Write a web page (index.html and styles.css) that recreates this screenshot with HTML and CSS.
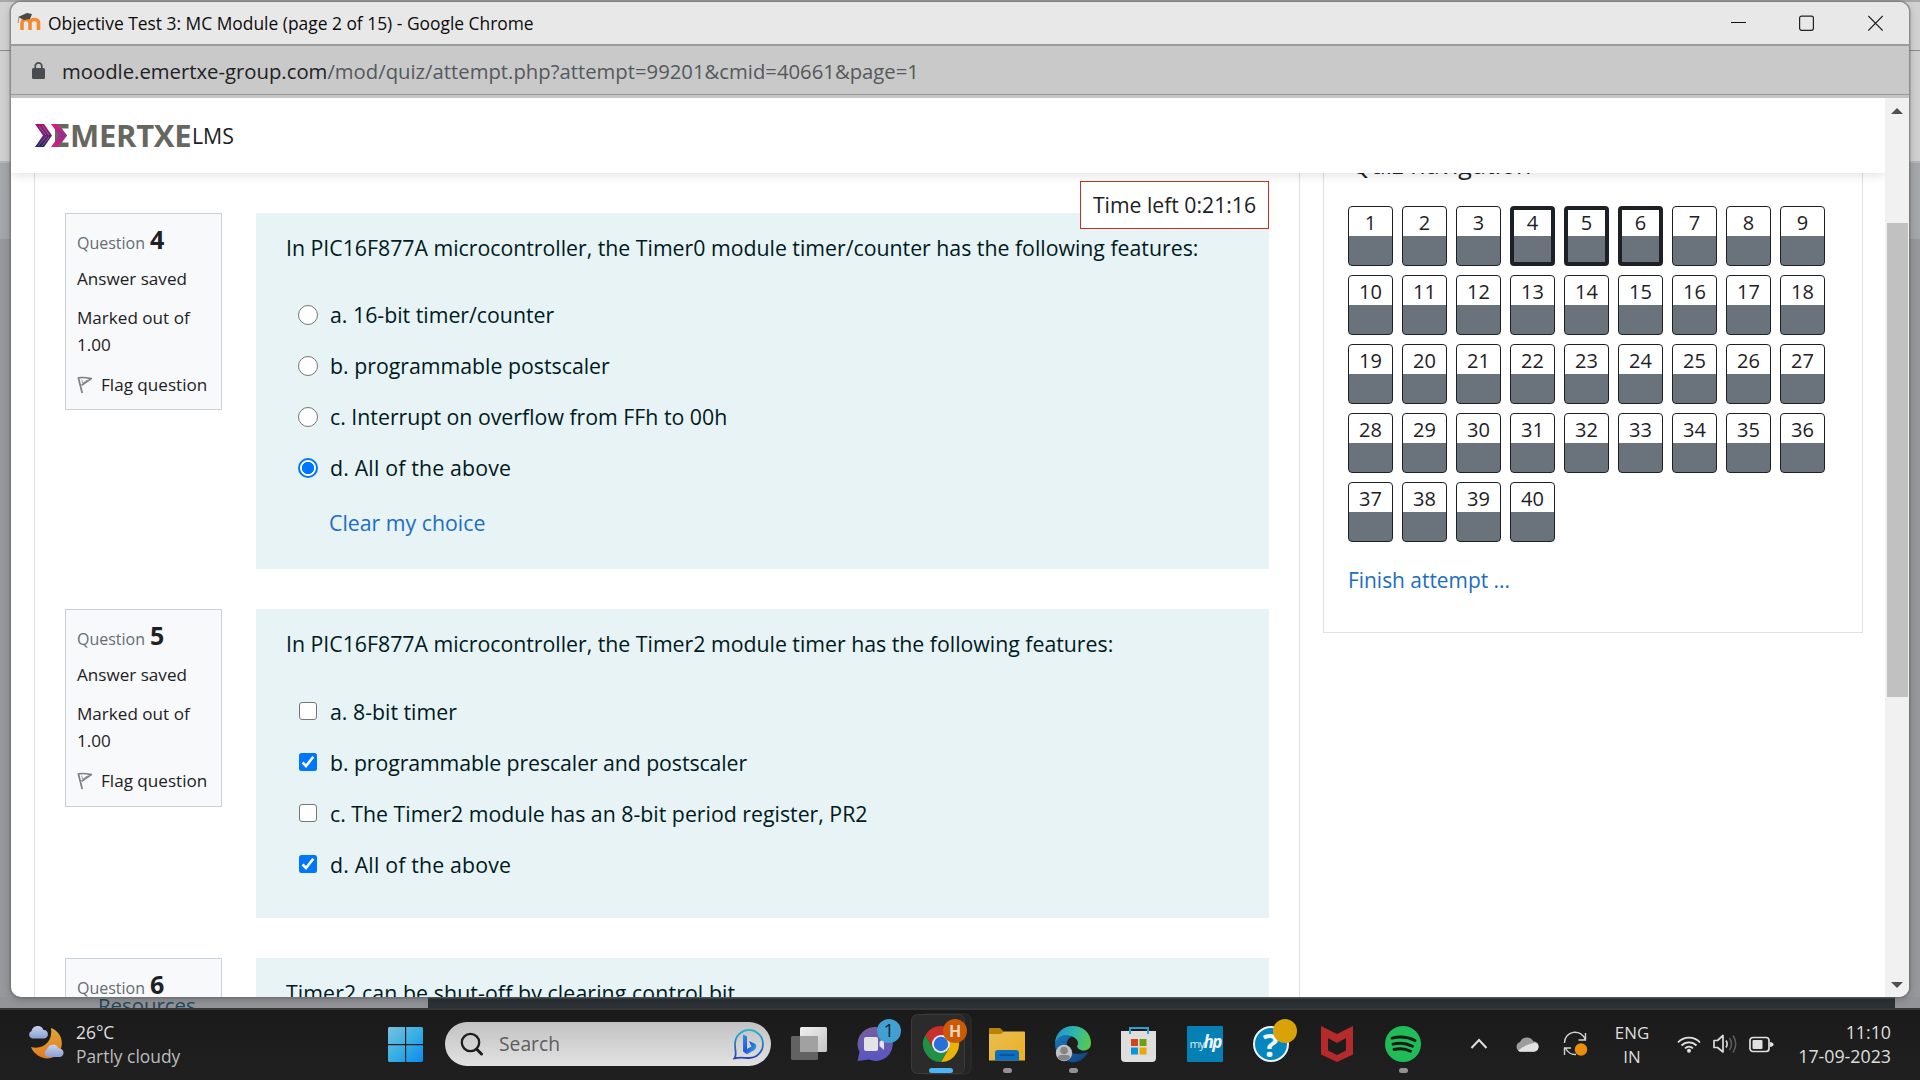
FILE: index.html
```html
<!DOCTYPE html>
<html lang="en">
<head>
<meta charset="utf-8">
<title>Objective Test 3: MC Module (page 2 of 15)</title>
<link rel="stylesheet" href="styles.css">
</head>
<body>
<svg class="defs" width="0" height="0" aria-hidden="true">
  <symbol id="flag" viewBox="0 0 16 18"><path d="M1.2 1.2 5.2 17M1.4 1.8 Q6 .9 14.3 2.6 L4.6 9.2" fill="none" stroke="#7d7f82" stroke-width="1.7" stroke-linejoin="round"/><path d="M4.6 3.6 L5.6 7.2 L10.4 3.9" fill="none" stroke="#9a9c9f" stroke-width="1"/></symbol>
</svg>

<div class="behind">
  <div class="behind-tabs"></div>
  <div class="behind-toolbar"></div>
  <div class="behind-header"></div>
  <div class="behind-body"></div>
  <div class="behind-footer"><span class="behind-link">Resources</span><span class="behind-dark"></span></div>
</div>

<div class="window">
  <header class="titlebar">
    <svg class="moodle" width="25" height="20" viewBox="0 0 25 20"><path d="M5 18V11.500Q5 7.500 9 7.500T13 11.500V18M13 11.500Q13 7.500 17.500 7.500T21.500 11.500V18" fill="none" stroke="#f58a2c" stroke-width="3.600"/><path d="M1 5 10 1 15 2 13 7 7 8 3 6Z" fill="#4a4a4a"/><path d="M2 5.500 1 11" stroke="#b58a68"/></svg>
    <span class="window-title">Objective Test 3: MC Module (page 2 of 15) - Google Chrome</span>
    <div class="controls">
      <svg width="15" height="20" viewBox="0 0 15 20"><path d="M0 9.500H15" stroke="#111"/></svg>
      <svg width="15" height="20" viewBox="0 0 15 20"><rect x=".6" y="3.100" width="13.800" height="14.200" rx="2" fill="none" stroke="#222" stroke-width="1.200"/></svg>
      <svg width="15" height="20" viewBox="0 0 15 20"><path d="M.3 3 14.700 17.500M14.700 3 .3 17.500" stroke="#222" stroke-width="1.300"/></svg>
    </div>
  </header>
  <div class="addressbar">
    <svg width="13" height="17" viewBox="0 0 13 17"><rect x="0" y="6" width="13" height="11" rx="1.500" fill="#494c50"/><path d="M3.200 7V4.200a3.300 3.300 0 0 1 6.600 0V7" fill="none" stroke="#494c50" stroke-width="1.700"/></svg>
    <span class="url">moodle.emertxe-group.com<span class="path">/mod/quiz/attempt.php?attempt=99201&amp;cmid=40661&amp;page=1</span></span>
  </div>

  <div class="viewport">
    <div class="page">
      <nav class="navbar">
        <svg class="logo-mark" width="36" height="23" viewBox="0 0 36 23">
          <defs>
            <linearGradient id="lg1" x1="0" y1="0" x2="0" y2="1"><stop offset="0" stop-color="#a3126e"/><stop offset=".5" stop-color="#6b1f74"/><stop offset="1" stop-color="#25215f"/></linearGradient>
            <linearGradient id="lg2" x1="0" y1="0" x2="0" y2="1"><stop offset="0" stop-color="#e5177d"/><stop offset=".5" stop-color="#9b2a90"/><stop offset="1" stop-color="#e5177d"/></linearGradient>
          </defs>
          <path d="M0 0H9L17 11.500 9 23H0L8 11.500Z" fill="url(#lg1)"/>
          <path d="M4 2 11 11M7 1 14 11M3 22 11 12.500M7 22 14 13" stroke="#ffffff" stroke-opacity=".35" stroke-width=".8"/>
          <path d="M20 0H33.500V4.500H27L32 11.500 27 18.500H33.500V23H20Z" fill="#66675f"/>
          <path d="M16 0H21.500L32 11.500 21.500 23H16L24.500 11.500Z" fill="url(#lg2)"/>
        </svg>
        <span class="logo-word">MERTXE</span><span class="logo-sub">LMS</span>
      </nav>

      <div class="columns">
        <main class="quiz">
          <section class="question">
            <aside class="info">
              <div class="qno">Question <b>4</b></div>
              <div class="state">Answer saved</div>
              <div class="grade">Marked out of 1.00</div>
              <div class="flagline"><svg width="16" height="18"><use href="#flag"/></svg>Flag question</div>
            </aside>
            <div class="formulation">
              <p class="qtext">In PIC16F877A microcontroller, the Timer0 module timer/counter has the following features:</p>
              <div class="option"><i class="radio"></i>a. 16-bit timer/counter</div>
              <div class="option"><i class="radio"></i>b. programmable postscaler</div>
              <div class="option"><i class="radio"></i>c. Interrupt on overflow from FFh to 00h</div>
              <div class="option wide"><i class="radio on"></i>d. All of the above</div>
              <a class="clear">Clear my choice</a>
              <div class="timer">Time left 0:21:16</div>
            </div>
          </section>
          <section class="question second">
            <aside class="info">
              <div class="qno">Question <b>5</b></div>
              <div class="state">Answer saved</div>
              <div class="grade">Marked out of 1.00</div>
              <div class="flagline"><svg width="16" height="18"><use href="#flag"/></svg>Flag question</div>
            </aside>
            <div class="formulation">
              <p class="qtext">In PIC16F877A microcontroller, the Timer2 module timer has the following features:</p>
              <div class="option"><i class="check"></i>a. 8-bit timer</div>
              <div class="option tight"><svg class="tick" width="18" height="18" viewBox="0 0 18 18"><rect width="18" height="18" rx="2.500" fill="#0075ff"/><path d="M3.600 9.500 7 13 14.300 3.800" fill="none" stroke="#fff" stroke-width="2.600"/></svg>b. programmable prescaler and postscaler</div>
              <div class="option"><i class="check"></i>c. The Timer2 module has an 8-bit period register, PR2</div>
              <div class="option wide"><svg class="tick" width="18" height="18" viewBox="0 0 18 18"><rect width="18" height="18" rx="2.500" fill="#0075ff"/><path d="M3.600 9.500 7 13 14.300 3.800" fill="none" stroke="#fff" stroke-width="2.600"/></svg>d. All of the above</div>
            </div>
          </section>
          <section class="question third">
            <aside class="info">
              <div class="qno">Question <b>6</b></div>
            </aside>
            <div class="formulation">
              <p class="qtext">Timer2 can be shut-off by clearing control bit</p>
            </div>
          </section>
        </main>

        <aside class="quiznav">
          <h2>Quiz navigation</h2>
          <div class="buttons" id="buttons"></div>
          <a class="finish">Finish attempt ...</a>
        </aside>
      </div>
    </div>
    <div class="scrollbar">
      <svg width="12" height="6" viewBox="0 0 12 6"><path d="M0 6 6 0 12 6Z" fill="#505050"/></svg>
      <div class="thumb"></div>
      <svg class="down" width="12" height="6" viewBox="0 0 12 6"><path d="M0 0H12L6 6Z" fill="#505050"/></svg>
    </div>
  </div>
</div>

<footer class="taskbar">
  <svg class="weather" width="38" height="36" viewBox="0 0 38 36">
    <defs>
      <linearGradient id="moon" x1="0" y1="0" x2="0" y2="1"><stop offset="0" stop-color="#d9a83a"/><stop offset="1" stop-color="#e8791c"/></linearGradient>
      <linearGradient id="cl" x1="0" y1="0" x2="0" y2="1"><stop offset="0" stop-color="#c9d3ea"/><stop offset="1" stop-color="#8a9fd4"/></linearGradient>
    </defs>
    <path d="M23 4C37 9 38 29 23 34 15 36 6 31 3 23 15 26 25 18 23 4Z" fill="url(#moon)"/>
    <path d="M4 14.500a4 4 0 0 1-.5-7.500 6.300 6.300 0 0 1 12-1 4.300 4.300 0 0 1 1 8.500Z" fill="url(#cl)"/>
    <path d="M19.500 33a4 4 0 0 1-.5-7.500 6 6 0 0 1 11.500-1 4.300 4.300 0 0 1 1.500 8.500Z" fill="url(#cl)"/>
  </svg>
  <div class="weather-text"><span>26°C</span><span class="dim">Partly cloudy</span></div>

  <svg class="start" width="35" height="35" viewBox="0 0 35 35">
    <defs><linearGradient id="win" gradientUnits="userSpaceOnUse" x1="0" y1="0" x2="35" y2="35"><stop offset="0" stop-color="#7cc0dd"/><stop offset=".5" stop-color="#37b0e4"/><stop offset="1" stop-color="#0a8af0"/></linearGradient></defs>
    <path d="M1 0H17V17H0V1ZM18.200 0H34L35 1V17H18.200ZM0 18.200H17V35H1L0 34ZM18.200 18.200H35V34L34 35H18.200Z" fill="url(#win)"/>
  </svg>
  <div class="search">
    <svg width="24" height="24" viewBox="0 0 24 24"><circle cx="10.500" cy="10.500" r="8.700" fill="none" stroke="#1d1d1d" stroke-width="2.300"/><path d="M16.500 17 21.500 22" stroke="#1d1d1d" stroke-width="3" stroke-linecap="round"/></svg>
    <span>Search</span>
    <svg class="bing" width="32" height="32" viewBox="0 0 32 32">
      <defs><linearGradient id="bg" x1="0" y1="0" x2="0" y2="1"><stop offset="0" stop-color="#28b4d4"/><stop offset="1" stop-color="#2443bd"/></linearGradient>
      <linearGradient id="bg2" x1="0" y1="0" x2="1" y2="1"><stop offset="0" stop-color="#2f93e6"/><stop offset=".5" stop-color="#2656d8"/><stop offset="1" stop-color="#2bc0dd"/></linearGradient></defs>
      <path d="M1.500 30.300C4 28 2 23 2 16A14 14 0 1 1 16 30C11 30 7 29 1.500 30.300Z" fill="none" stroke="url(#bg)" stroke-width="1.800"/>
      <path d="M10 6.500 14 8.200V21L18.500 18.500 16 13 22.500 16Q24.500 19 21.500 22L14 26.300 10 23.500Z" fill="url(#bg2)"/>
    </svg>
  </div>

  <div class="apps">
    <svg viewBox="0 0 66 70"><defs><linearGradient id="tv" x1="0" y1="0" x2="1" y2="1"><stop offset="0" stop-color="#f0f0f0"/><stop offset="1" stop-color="#c4c4c4"/></linearGradient></defs><rect x="15" y="26" width="27" height="24" rx="1.500" fill="#626262"/><rect x="24" y="17" width="27" height="25" rx="1.500" fill="url(#tv)"/><path d="M24 26H42V42H24Z" fill="#a1a1a1"/></svg>
    <svg viewBox="0 0 66 70"><defs><linearGradient id="chat" x1="0" y1="0" x2="0" y2="1"><stop offset="0" stop-color="#7a5d9c"/><stop offset="1" stop-color="#5656c4"/></linearGradient></defs><path d="M32 17A17 17 0 1 1 27 49.500L15.500 51 17.500 42A17 17 0 0 1 32 17Z" fill="url(#chat)"/><rect x="22" y="27" width="14" height="14" rx="2" fill="#e3e3e6"/><path d="M37.500 32 42 28V40L37.500 36Z" fill="#e3e3e6"/><circle cx="47" cy="21" r="12" fill="#429fd2"/><text x="47" y="27" text-anchor="middle" class="badge">1</text></svg>
    <svg viewBox="0 0 66 70"><rect x="12" y="4" width="51" height="60" rx="6" fill="#242424" stroke="#303030"/><rect x="3.500" y="4.500" width="53" height="59" rx="6" fill="#2b2b2b" stroke="#3a3a3a"/><g transform="translate(33 34)"><path d="M-15.590-9A18 18 0 0 1 15.590-9L0-9 -7.800 4.500Z" fill="#c7302b"/><path d="M15.590-9A18 18 0 0 1 0 18L7.800 4.500 0-9Z" fill="#eab308"/><path d="M0 18A18 18 0 0 1-15.590-9L-7.800 4.500 7.800 4.500Z" fill="#209145"/><circle r="9" fill="#e9e9ec"/><circle r="7.200" fill="#286fd8"/></g><circle cx="47" cy="21" r="12" fill="#cb5a05"/><text x="47" y="27" text-anchor="middle" class="initial">H</text><rect x="21" y="58" width="24" height="5" rx="2.500" fill="#4cb5f5"/></svg>
    <svg viewBox="0 0 66 70"><defs><linearGradient id="fold" x1="0" y1="0" x2="1" y2="1"><stop offset="0" stop-color="#e6be55"/><stop offset="1" stop-color="#eeb01f"/></linearGradient></defs><path d="M15 19Q15 18 16 18H26L30 22V28H15Z" fill="#b98406"/><path d="M15 24H27L30 21.500H50Q51 21.500 51 22.500V50.500H15Z" fill="url(#fold)"/><path d="M21 50.500V43Q21 40 24 40H42Q45 40 45 43V50.500Z" fill="#0e6fc0"/><path d="M26 45H40" stroke="#0b4c88" stroke-width="1.500" stroke-linecap="round"/><rect x="29" y="58" width="9" height="5" rx="2.500" fill="#929292"/></svg>
    <svg viewBox="0 0 66 70"><defs><linearGradient id="e1" x1="0" y1=".3" x2="1" y2=".5"><stop offset="0" stop-color="#2493c9"/><stop offset=".5" stop-color="#2cb6ab"/><stop offset="1" stop-color="#58c84e"/></linearGradient><linearGradient id="e2" x1="0" y1="0" x2="1" y2="1"><stop offset="0" stop-color="#1979bb"/><stop offset="1" stop-color="#0f407f"/></linearGradient></defs><path d="M15 34C15 23 23 16 33 16S51 23 51 33 38 42 37 36C40 34 37 25 27 26 20 27 16 31 15 34Z" fill="url(#e1)"/><path d="M15 34C17 26 25 23 32 26.500 28 28 25 33 28 39S39 45 48 42C44 50 38 53 31 52 21 51 15 43 15 34Z" fill="url(#e2)"/><circle cx="24" cy="43" r="8.200" fill="#c2c2c2"/><circle cx="24" cy="40.500" r="3.800" fill="#858585"/><path d="M18 48Q18 45 21 45H27Q30 45 30 48 24 53 18 48Z" fill="#858585"/><rect x="29" y="58" width="9" height="5" rx="2.500" fill="#929292"/></svg>
    <svg viewBox="0 0 66 70"><path d="M15 21H50V48Q50 52 46 52H19Q15 52 15 48Z" fill="#dededf"/><path d="M24 24V18H42V24" fill="none" stroke="#2ba0cc" stroke-width="2"/><path d="M25 29H32V36H25Z" fill="#d3431c"/><path d="M33.500 29H40.500V36H33.500Z" fill="#70a009"/><path d="M25 37.500H32V44.500H25Z" fill="#0b93dc"/><path d="M33.500 37.500H40.500V44.500H33.500Z" fill="#eaa705"/></svg>
    <svg viewBox="0 0 66 70"><rect x="15" y="16" width="36" height="36" rx="1" fill="#0580b5"/><text x="17.500" y="37.500" class="my">my</text><text x="31.500" y="38" class="hp">hp</text></svg>
    <svg viewBox="0 0 66 70"><circle cx="33" cy="34" r="17" fill="#0586be" stroke="#eef2f4" stroke-width="2"/><text x="32.500" y="46.500" text-anchor="middle" class="help">?</text><circle cx="47" cy="21" r="12" fill="#d9a308"/></svg>
    <svg viewBox="0 0 66 70"><path d="M17 16 33 24 49 16V44.500L33 52 17 44.500Z" fill="#b52a2a"/><path d="M24 28 33 33 42 28V40.500L33 45 24 40.500Z" fill="#1d1d1d"/></svg>
    <svg viewBox="0 0 66 70"><circle cx="33" cy="34" r="18" fill="#1fbc58"/><path d="M22 28.200Q34 25 45 30.500M23 34.200Q33 31.500 42.500 36.200M24 39.500Q33 37.300 40.500 41.200" fill="none" stroke="#151a17" stroke-width="2.900" stroke-linecap="round"/><rect x="29" y="58" width="9" height="5" rx="2.500" fill="#929292"/></svg>
  </div>

  <div class="tray">
    <svg class="chev" width="18" height="12" viewBox="0 0 18 12"><path d="M1.500 10 9 2 16.500 10" fill="none" stroke="#e0e0e0" stroke-width="2"/></svg>
    <svg class="cloud" width="24" height="16" viewBox="0 0 24 16"><path d="M5 15.500A5 5 0 0 1 5 6 7.500 7.500 0 0 1 18.500 5.500 5 5 0 0 1 19 15.500Z" fill="#9c9c9c"/><path d="M3 14.800 Q8 10 15 8 L20 6.500A4.700 4.700 0 0 1 19 15.700H5Z" fill="#e2e2e2"/></svg>
    <svg class="sync" width="25" height="26" viewBox="0 0 25 26"><path d="M1.500 12A10.500 10.500 0 0 1 22 8.500M22.500 2V9H15.500M13 23.500A10.500 10.500 0 0 1 2.500 17M1.500 24V17H8" fill="none" stroke="#d2d2d2" stroke-width="1.400"/><circle cx="18" cy="18.500" r="6.200" fill="#e8900c"/></svg>
    <div class="lang"><span>ENG</span><span>IN</span></div>
    <svg class="wifi" width="24" height="18" viewBox="0 0 24 18"><path d="M1 7.500A15 15 0 0 1 23 7.500M4.500 10.500A10.500 10.500 0 0 1 19.500 10.500M8 13.300A6 6 0 0 1 16 13.300" fill="none" stroke="#e0e0e0" stroke-width="1.800"/><circle cx="12" cy="15.800" r="2" fill="#e0e0e0"/></svg>
    <svg class="sound" width="25" height="20" viewBox="0 0 25 20"><path d="M1 6.500H4.500L10 1.500V18L4.500 13.500H1Z" fill="none" stroke="#dcdcdc" stroke-width="1.700" stroke-linejoin="round"/><path d="M13 6.500Q15.300 10 13 13.500" fill="none" stroke="#dcdcdc" stroke-width="1.600"/><path d="M16.500 4Q20.500 10 16.500 16M20 1.500Q25.500 10 20 18.500" fill="none" stroke="#5e5e5e" stroke-width="1.500"/></svg>
    <svg class="battery" width="25" height="17" viewBox="0 0 25 17"><rect x="1" y="1.500" width="19" height="14" rx="3" fill="none" stroke="#e0e0e0" stroke-width="1.700"/><rect x="3.500" y="4" width="10" height="9" rx="1" fill="#e0e0e0"/><path d="M21.500 6.500 24 7.500V9.500L21.500 10.500Z" fill="#e0e0e0" stroke="#e0e0e0"/></svg>
    <div class="clock"><span>11:10</span><span>17-09-2023</span></div>
  </div>
</footer>
<script src="nav.js"></script>
</body>
</html>
```
FILE: nav.js
```js
const current = [4, 5, 6];
const host = document.getElementById('buttons');
for (let n = 1; n <= 40; n++) {
  const a = document.createElement('a');
  a.className = current.includes(n) ? 'qbtn current' : 'qbtn';
  const label = document.createElement('span');
  label.textContent = n;
  a.append(label);
  host.append(a);
}
```
FILE: styles.css
```css
* { box-sizing: border-box; }
body {
  margin: 0;
  width: 1920px;
  height: 1080px;
  overflow: hidden;
  position: relative;
  background: #97999d;
  color: #1d2125;
  font-family: "Open Sans", "Noto Sans", sans-serif;
  font-size: 21.3px;
  white-space: nowrap;
}
svg { display: block; flex: none; }
.defs { position: absolute; }

/* browser window underneath */
.behind { position: absolute; inset: 0; display: flex; flex-direction: column; }
.behind-tabs { height: 51px; background: linear-gradient(#a8a8a8 2px, #d2d2d2 2px); border-bottom: 1px solid #8c8c8c; }
.behind-toolbar { height: 112px; background: #d0d0d0; border-bottom: 2px solid #b4b5b6; }
.behind-header { height: 76px; background: #a3a7aa; }
.behind-body { flex: 1; background: #96989c; }
.behind-footer { height: 83px; display: flex; align-items: flex-start; background: #929498; }
.behind-link { width: 428px; padding-left: 98px; line-height: 16px; font-size: 20.4px; color: #1f4a60; }
.behind-dark { width: 1467px; height: 83px; background: #2d3236; }

/* popup window */
.window {
  position: absolute;
  left: 11px;
  top: 2px;
  width: 1898px;
  height: 995px;
  display: flex;
  flex-direction: column;
  overflow: hidden;
  border-radius: 10px;
  background: #fff;
  box-shadow: 0 0 0 1.5px rgba(110, 112, 115, .6), 0 2px 8px rgba(0, 0, 0, .25);
}
.titlebar { height: 42px; flex: none; display: flex; align-items: center; background: #e8e8e8; padding-left: 6px; }
.window-title { font-size: 17.4px; color: #0c0c0c; margin: -1px 0 0 6px; }
.controls { display: flex; gap: 53px; margin-left: auto; margin-right: 26px; }
.controls svg:nth-child(-n+2) { margin-left: -1px; margin-right: 1px; }
.moodle { margin-top: -2px; }
.addressbar {
  height: 54px;
  border-top: 2px solid #9c9c9c;
  border-bottom: 3px solid #c5c5c5;
  background: linear-gradient(#c9c9c9 48px, #999 48px);
  display: flex;
  align-items: center;
  padding: 0 0 0 21px;
  flex: none;
}
.url { font-size: 20.3px; margin-left: 17px; color: #202124; }
.path { color: #55585c; }
.viewport { flex: 1; display: flex; min-height: 0; }
.page { width: 1874px; display: flex; flex-direction: column; overflow: hidden; }
.navbar {
  height: 75px;
  flex: none;
  position: relative;
  z-index: 2;
  display: flex;
  align-items: center;
  padding-left: 24px;
  background: #fff;
  box-shadow: 0 2px 10px rgba(0, 0, 0, .12);
}
.logo-mark { margin-top: -1px; }
.logo-word { width: 121px; margin: -2px 0 0 -1px; font-size: 31px; font-weight: 700; letter-spacing: -.3px; color: #66675f; line-height: 72px; }
.logo-sub { font-size: 21.3px; margin-left: 1px; }
.columns { flex: 1; display: flex; gap: 23px; min-height: 0; padding-left: 23px; }
.quiz { width: 1266px; flex: none; border: solid #dee2e6; border-width: 0 1px; padding: 40px 29px 0 30px; overflow: hidden; }
.question { display: flex; gap: 34px; align-items: flex-start; margin-bottom: 40px; height: 356px; }
.second { height: 309px; }
.third { height: 200px; }
.info {
  width: 157px;
  height: 197px;
  border: 1px solid #cad0d7;
  background: #f8f9fa;
  padding: 12px 10px 0 11px;
  font-size: 17.1px;
  line-height: 27px;
}
.second .info { height: 198px; }
.qno { display: flex; align-items: baseline; gap: 5px; height: 30px; margin-bottom: 9px; font-size: 16px; color: #656c74; }
.qno b { font-size: 25px; color: #1d2125; }
.state { margin-bottom: 12px; }
.grade { white-space: normal; width: 125px; margin-bottom: 13px; }
.flagline { display: flex; align-items: center; gap: 8px; }
.formulation { position: relative; width: 1013px; align-self: stretch; background: #e7f3f5; color: #001a1e; padding: 19px 30px 0; }
.qtext { margin: 0 0 25px; line-height: 32px; letter-spacing: -.01px; }
.third .qtext { letter-spacing: .1px; }
.second .qtext { margin-bottom: 26px; }
.option { height: 51px; line-height: 51px; display: flex; align-items: center; padding-left: 12px; }
.option.wide { letter-spacing: .18px; }
.option.tight { letter-spacing: -.09px; }
.radio { width: 20px; height: 20px; border: 1.5px solid #767676; border-radius: 50%; background: #fff; margin-right: 12px; }
.radio.on { border: 2px solid #0075ff; background: radial-gradient(circle, #0075ff 5.8px, #fff 6.4px); }
.check { width: 18px; height: 18px; border: 1.5px solid #767676; border-radius: 3px; background: #fff; margin: -1px 13px 0 1px; }
.tick { margin: -1px 13px 0 1px; }
.clear { display: block; margin: 14px 0 0 43px; line-height: 32px; color: #1c6ec2; }
.timer { position: absolute; right: 0; top: -32px; width: 189px; height: 48px; border: 1px solid #ca3120; background: #fff; line-height: 45px; text-align: center; color: #1d2125; font-size: 21.2px; }

.quiznav { width: 540px; height: 460px; flex: none; border: solid #dee2e6; border-width: 0 1px 1px; padding-left: 24px; }
.quiznav h2 { margin: -26px 0 25px 3px; font-size: 25px; font-weight: 400; line-height: 34px; }
.buttons { display: grid; grid-template-columns: repeat(9, 45px); gap: 9px; }
.qbtn {
  height: 60px;
  border: 1px solid #1d2125;
  border-radius: 4px;
  background: linear-gradient(#fff 50%, #6a737b 50%);
  background-origin: border-box;
  font-size: 20px;
  line-height: 32px;
  text-align: center;
}
.qbtn.current { border-width: 4px; line-height: 26px; }
.finish { display: block; margin-top: 22px; line-height: 32px; font-size: 20.9px; color: #1c6ec2; }

.scrollbar { width: 24px; flex: none; background: #f1f1f1; display: flex; flex-direction: column; align-items: center; padding: 10px 0 9px; }
.thumb { width: 21px; height: 474px; margin-top: 109px; background: #c1c1c1; }
.down { margin-top: auto; }

/* taskbar */
.taskbar {
  position: absolute;
  left: 0;
  bottom: 0;
  width: 1920px;
  height: 72px;
  padding-top: 2px;
  background: linear-gradient(#34383a 2px, #1a1a1a 2px, #202020);
  display: flex;
  align-items: center;
  color: #dedede;
  font-size: 17.4px;
  line-height: 24px;
}
.weather { margin: -6px 0 0 28px; }
.weather-text { display: flex; flex-direction: column; width: 312px; margin: -3px 0 0 10px; }
.dim { color: #bcbcbc; }
.start { margin-top: -2px; }
.search { width: 326px; height: 44px; margin: -3px 0 0 22px; border-radius: 22px; background: linear-gradient(#c2c2c2, #e2e2e2); display: flex; align-items: center; padding-left: 15px; }
.search span { font-size: 19.3px; color: #5e5e5e; margin: 1px 0 0 15px; flex: 1; }
.bing { margin-right: 6px; }
.apps { display: flex; margin-left: 5px; }
.apps svg { width: 66px; height: 70px; }
.badge { font-size: 18px; fill: #10202a; }
.initial { font-size: 16px; font-weight: 700; fill: #ead2c0; }
.my { font-size: 11.5px; fill: #d9ecf5; letter-spacing: -.8px; }
.hp { font-size: 17px; font-style: italic; font-weight: 700; fill: #f0f7fa; letter-spacing: -1.5px; }
.help { font-size: 33px; font-weight: 700; fill: #f2f5f6; }
.tray { display: flex; align-items: center; margin-left: 34px; }
.tray svg { margin-top: -2px; }
.tray .cloud { margin-left: 27px; }
.tray .sync { margin-left: 24px; }
.lang { width: 36px; margin: -1px 0 0 26px; display: flex; flex-direction: column; align-items: center; font-size: 16.9px; }
.tray .wifi { margin-left: 27px; }
.tray .sound { margin-left: 12px; }
.tray .battery { margin-left: 11px; }
.clock { width: 117px; margin-top: -3px; display: flex; flex-direction: column; align-items: flex-end; font-size: 17.8px; }
```
